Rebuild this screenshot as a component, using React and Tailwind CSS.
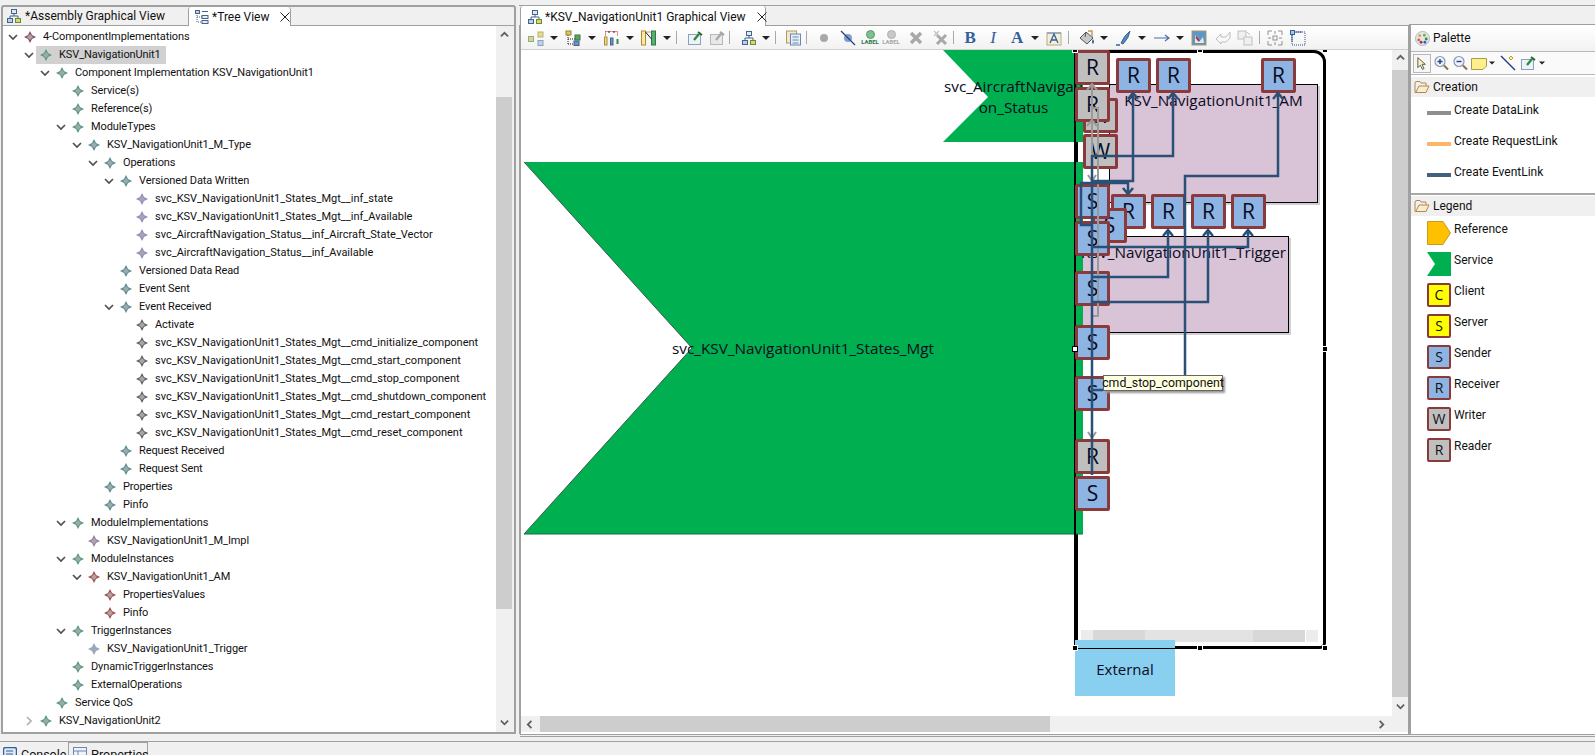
import React from "react";

// Tree rows: [level, open, diamond colour, label]
const GREEN = "#4f9a80";
const TEAL = "#4f8f96";
const LAV = "#8f8cc4";
const GRAY = "#5f5f5f";
const PLUM = "#8a4a68";
const MAUVE = "#9a7aa8";
const RED = "#a84a4a";
const SKY = "#8fa6cc";

const ROWS = [
  [0, true, PLUM, "4-ComponentImplementations"],
  [1, true, GREEN, "KSV_NavigationUnit1", true],
  [2, true, GREEN, "Component Implementation KSV_NavigationUnit1"],
  [3, null, GREEN, "Service(s)"],
  [3, null, GREEN, "Reference(s)"],
  [3, true, GREEN, "ModuleTypes"],
  [4, true, TEAL, "KSV_NavigationUnit1_M_Type"],
  [5, true, TEAL, "Operations"],
  [6, true, TEAL, "Versioned Data Written"],
  [7, null, LAV, "svc_KSV_NavigationUnit1_States_Mgt__inf_state"],
  [7, null, LAV, "svc_KSV_NavigationUnit1_States_Mgt__inf_Available"],
  [7, null, LAV, "svc_AircraftNavigation_Status__inf_Aircraft_State_Vector"],
  [7, null, LAV, "svc_AircraftNavigation_Status__inf_Available"],
  [6, null, TEAL, "Versioned Data Read"],
  [6, null, TEAL, "Event Sent"],
  [6, true, TEAL, "Event Received"],
  [7, null, GRAY, "Activate"],
  [7, null, GRAY, "svc_KSV_NavigationUnit1_States_Mgt__cmd_initialize_component"],
  [7, null, GRAY, "svc_KSV_NavigationUnit1_States_Mgt__cmd_start_component"],
  [7, null, GRAY, "svc_KSV_NavigationUnit1_States_Mgt__cmd_stop_component"],
  [7, null, GRAY, "svc_KSV_NavigationUnit1_States_Mgt__cmd_shutdown_component"],
  [7, null, GRAY, "svc_KSV_NavigationUnit1_States_Mgt__cmd_restart_component"],
  [7, null, GRAY, "svc_KSV_NavigationUnit1_States_Mgt__cmd_reset_component"],
  [6, null, TEAL, "Request Received"],
  [6, null, TEAL, "Request Sent"],
  [5, null, TEAL, "Properties"],
  [5, null, TEAL, "Pinfo"],
  [3, true, GREEN, "ModuleImplementations"],
  [4, null, MAUVE, "KSV_NavigationUnit1_M_Impl"],
  [3, true, GREEN, "ModuleInstances"],
  [4, true, RED, "KSV_NavigationUnit1_AM"],
  [5, null, RED, "PropertiesValues"],
  [5, null, RED, "Pinfo"],
  [3, true, GREEN, "TriggerInstances"],
  [4, null, SKY, "KSV_NavigationUnit1_Trigger"],
  [3, null, GREEN, "DynamicTriggerInstances"],
  [3, null, GREEN, "ExternalOperations"],
  [2, null, GREEN, "Service QoS"],
  [1, false, GREEN, "KSV_NavigationUnit2"],
];

const INDENT = ["pl-[4px]", "pl-[20px]", "pl-[36px]", "pl-[52px]", "pl-[68px]", "pl-[84px]", "pl-[100px]", "pl-[116px]"];

// Canvas nodes, in page coordinates
const PORTS = [
  ["W", 1083, 98, "g"],
  ["R", 1075, 50, "g"],
  ["R", 1075, 87, "g"],
  ["W", 1083, 134, "g"],
  ["R", 1116, 58, "b"],
  ["R", 1156, 58, "b"],
  ["R", 1261, 58, "b"],
  ["R", 1111, 194, "b"],
  ["R", 1151, 194, "b"],
  ["R", 1191, 194, "b"],
  ["R", 1231, 194, "b"],
  ["S", 1092, 208, "b"],
  ["S", 1075, 184, "b"],
  ["S", 1075, 221, "b"],
  ["S", 1075, 271, "b"],
  ["S", 1075, 325, "b"],
  ["S", 1075, 376, "b"],
  ["R", 1075, 439, "g"],
  ["S", 1075, 476, "b"],
];

const HANDLES = [
  [1075, 50], [1200, 50], [1325, 50], [1325, 349], [1075, 648], [1200, 648], [1325, 648],
];

function Diamond({ color }) {
  return (
    <svg viewBox="0 0 12 12" className="w-3 h-3 shrink-0">
      <path d="M6 0 L8 4 L12 6 L8 8 L6 12 L4 8 L0 6 L4 4 Z" fill={color} />
      <path d="M6 3 L9 6 L6 9 L3 6 Z" fill="#a6a6a6" />
    </svg>
  );
}

function Chevron({ open }) {
  return (
    <svg viewBox="0 0 12 12" className="w-3 h-3 shrink-0">
      {open ? (
        <path d="M2 4 L6 8 L10 4" fill="none" stroke="#505050" strokeWidth="1.7" />
      ) : (
        <path d="M4 2 L8 6 L4 10" fill="none" stroke="#b0b0b0" strokeWidth="1.7" />
      )}
    </svg>
  );
}

function TreeRow({ level, open, color, label, selected }) {
  return (
    <div className={`flex items-center h-[18px] whitespace-nowrap ${INDENT[level]}`}>
      {open === null ? <span className="w-3 shrink-0" /> : <Chevron open={open} />}
      <span className={`flex items-center h-[18px] ml-[1px] pl-[4px] pr-[5px] ${selected ? "bg-[#d1d1d1]" : ""}`}>
        <Diamond color={color} />
        <span className={`ml-[7px] ${label.includes("__") ? "tracking-normal" : ""}`}>{label}</span>
      </span>
    </div>
  );
}

function Arrow({ dir }) {
  const d = { up: "M1 6 L5 2 L9 6", down: "M1 3 L5 7 L9 3", left: "M6 1 L2 5 L6 9", right: "M3 1 L7 5 L3 9" }[dir];
  return (
    <svg viewBox="0 0 10 10" className="w-[9px] h-[9px]">
      <path d={d} fill="none" stroke="#606060" strokeWidth="2" />
    </svg>
  );
}

function CloseX({ className = "" }) {
  return (
    <svg viewBox="0 0 10 10" className={`w-[10px] h-[10px] shrink-0 ${className}`}>
      <path d="M0.5 0.5 L9.5 9.5 M9.5 0.5 L0.5 9.5" stroke="#222" strokeWidth="1" />
    </svg>
  );
}

function VScroll({ children }) {
  return <div className="flex flex-col w-[16px] shrink-0 bg-[#f0f0f0]">{children}</div>;
}

function Ic({ className = "", children }) {
  return (
    <svg viewBox="0 0 16 16" className={`w-4 h-4 shrink-0 ${className}`}>
      {children}
    </svg>
  );
}

function Drop({ className = "" }) {
  return (
    <span className={`flex justify-center shrink-0 ${className}`}>
      <span className="w-0 h-0 border-x-[4px] border-x-transparent border-t-[4px] border-t-[#222]" />
    </span>
  );
}

function Sep({ className = "" }) {
  return <span className={`w-[1px] h-[13px] mr-[1px] bg-[#a8a8a8] shrink-0 ${className}`} />;
}

function NetIcon({ className }) {
  return (
    <Ic className={className}>
      <path d="M8 5 V8 M4 11 V8 H12 V11" stroke="#44648c" fill="none" />
      <rect x="5.5" y="1.5" width="5" height="4" fill="#dfe9f5" stroke="#44648c" />
      <rect x="1.5" y="10.5" width="5" height="4" fill="#b8d0ea" stroke="#44648c" />
      <rect x="9.5" y="10.5" width="5" height="4" fill="#d9d86a" stroke="#6a8a3a" />
    </Ic>
  );
}

function TreeIcon({ className }) {
  return (
    <Ic className={className}>
      <path d="M3 4 V13 H8 M3 8 H8" stroke="#44648c" fill="none" strokeDasharray="1 1" />
      <rect x="1.5" y="1.5" width="4" height="3" fill="#b8d0ea" stroke="#44648c" />
      <rect x="8" y="6.5" width="6" height="3" fill="#e8eef5" stroke="#44648c" />
      <rect x="8" y="11.5" width="6" height="3" fill="#e8eef5" stroke="#44648c" />
      <path d="M8 2.5 H14" stroke="#44648c" />
    </Ic>
  );
}

function NoteIcon({ className }) {
  return (
    <Ic className={className}>
      <rect x="1.5" y="4.5" width="12" height="10" fill="#eef3fa" stroke="#8aa0bc" />
      <path d="M7 10 L12 4" stroke="#2e8b3d" strokeWidth="2.4" />
      <path d="M11 2 L15 5" stroke="#1e6b2d" strokeWidth="1.8" />
    </Ic>
  );
}

function Toolbar() {
  return (
    <div className="flex items-center h-[24px] shrink-0 pl-[7px] border-b border-[#d0d0d0] bg-gradient-to-b from-white to-[#f2f2f2]">
      <Ic>
        <rect x="0.5" y="6.5" width="5" height="5" fill="#c8d99a" stroke="#a0a878" />
        <rect x="10" y="2" width="5" height="5" fill="#e6dc90" stroke="#b8b078" />
        <rect x="10" y="10.5" width="5" height="5" fill="#bcd3ec" stroke="#8aa0bc" />
      </Ic>
      <Drop className="w-[20px]" />
      <Ic className="w-[18px]">
        <path d="M3 5 V14 M3 9 H10 M3 14 H8" stroke="#222" strokeDasharray="1 1" fill="none" />
        <rect x="1" y="1" width="5" height="4" fill="#e3c65a" stroke="#9a8430" />
        <rect x="10" y="5" width="5" height="5" fill="#5aa55a" stroke="#3a7a3a" />
        <rect x="9" y="11" width="5" height="4.5" fill="#6f8fc8" stroke="#44648c" />
      </Ic>
      <Drop className="w-[20px]" />
      <Ic className="w-[19px]">
        <path d="M2 1.5 H14 M2 1.5 V6 M14 1.5 V6" stroke="#d02020" strokeDasharray="1 1" fill="none" />
        <rect x="1" y="7" width="2.5" height="8" fill="#f0dc90" stroke="#b08a30" />
        <rect x="7" y="8" width="2.5" height="7" fill="#6f8fc8" stroke="#44648c" />
        <rect x="13" y="9" width="2" height="5" fill="#3a8a4a" />
        <path d="M5 2 H6 M10 2 H11" stroke="#222" strokeWidth="2" />
      </Ic>
      <Drop className="w-[18px]" />
      <Ic className="w-[19px]">
        <rect x="1" y="1" width="4" height="14" fill="#fbeaa0" stroke="#b08a30" />
        <rect x="11" y="1" width="4" height="14" fill="#55b070" stroke="#2e7a45" />
        <path d="M5 2 L11 9" stroke="#222" />
        <path d="M5 2 H11" stroke="#d02020" strokeDasharray="1 1" />
      </Ic>
      <Drop className="w-[18px]" />
      <Sep />
      <NoteIcon className="ml-[9px]" />
      <Ic className="ml-[6px]">
        <rect x="1.5" y="4.5" width="12" height="10" fill="#e8e8e8" stroke="#b8b8b8" />
        <path d="M7 10 L12 4 M11 2 L15 5" stroke="#a8a8a8" strokeWidth="2.2" />
      </Ic>
      <Sep className="ml-[4px]" />
      <NetIcon className="ml-[10px]" />
      <Drop className="w-[18px]" />
      <Sep />
      <Ic className="ml-[8px] w-[17px]">
        <rect x="1" y="1" width="10" height="12" fill="#f3e8c8" stroke="#b09a68" />
        <rect x="5" y="4" width="10" height="11" fill="#e6eef8" stroke="#6a88b0" />
        <path d="M7 7 H13 M7 10 H13 M7 13 H13" stroke="#6a88b0" />
      </Ic>
      <Sep className="ml-[4px]" />
      <Ic className="ml-[8px]">
        <circle cx="8" cy="8" r="4" fill="#a8a8a8" />
      </Ic>
      <Ic className="ml-[8px]">
        <circle cx="8" cy="8" r="4" fill="#7f9fc4" />
        <path d="M1 1 L15 15" stroke="#24408a" strokeWidth="1.3" />
      </Ic>
      <span className="ml-[6px] flex flex-col items-center w-4 shrink-0">
        <span className="w-[9px] h-[9px] rounded-full bg-[#7fbf8f] border border-[#5a9a6a]" />
        <span className="text-[6px] leading-[6px] font-bold text-[#2e7a45]">LABEL</span>
      </span>
      <span className="ml-[5px] flex flex-col items-center w-4 shrink-0">
        <span className="w-[9px] h-[9px] rounded-full bg-[#c8c8c8] border border-[#b0b0b0]" />
        <span className="text-[6px] leading-[6px] font-bold text-[#a8a8a8]">LABEL</span>
      </span>
      <Ic className="ml-[9px]">
        <path d="M3 3 L13 13 M13 3 L3 13" stroke="#a8a8a8" strokeWidth="3.4" />
      </Ic>
      <Ic className="ml-[9px]">
        <path d="M4 5 L13 14 M13 5 L4 14" stroke="#a8a8a8" strokeWidth="3" />
        <path d="M1 1 L6 6 M6 1 L1 6" stroke="#c0c0c0" strokeWidth="1.2" />
      </Ic>
      <Sep className="ml-[4px]" />
      <span className="ml-[7px] w-4 shrink-0 text-center font-['Liberation_Serif',serif] font-bold text-[17px] leading-none text-[#34609a]">B</span>
      <span className="ml-[7px] w-4 shrink-0 text-center font-['Liberation_Serif',serif] italic text-[17px] leading-none text-[#34609a]">I</span>
      <span className="ml-[8px] w-4 shrink-0 text-center font-['Liberation_Serif',serif] font-bold text-[17px] leading-none text-[#34609a]">A</span>
      <Drop className="w-[20px]" />
      <Ic className="ml-[1px]">
        <rect x="1" y="3" width="14" height="12" fill="#f5efd8" stroke="#b8a880" />
        <path d="M1 3 H15" stroke="#7f9fc4" strokeWidth="1.4" />
        <path d="M4 13 L8 4 L12 13 M5.5 10 H10.5" stroke="#34609a" fill="none" strokeWidth="1.3" />
      </Ic>
      <Sep className="ml-[6px]" />
      <Ic className="ml-[9px]">
        <path d="M7 2 L14 8 L8 14 L1 8 Z" fill="#c8c8c8" stroke="#555" />
        <path d="M7 2 L6 7" stroke="#555" />
        <path d="M14 9 Q16 12 14 14 Q12 12 14 9" fill="#34609a" />
        <path d="M9 1 H13 V7" stroke="#b89a50" fill="none" strokeWidth="1.4" />
      </Ic>
      <Drop className="w-[18px]" />
      <Ic className="ml-[3px]">
        <path d="M5 13 Q8 6 14 1 Q13 8 7 14 Z" fill="#5f86c0" stroke="#34609a" />
        <path d="M0 15 H4" stroke="#34609a" strokeWidth="1.5" />
      </Ic>
      <Drop className="w-[18px] ml-[1px]" />
      <Ic className="ml-[3px]">
        <path d="M0 8 H15 M11 5 L15 8 L11 11" stroke="#4a6ea8" fill="none" strokeWidth="1.2" />
      </Ic>
      <Drop className="w-[18px] ml-[1px]" />
      <Ic className="ml-[2px]">
        <rect x="1" y="1" width="14" height="14" fill="#5f96c8" stroke="#a89a60" />
        <path d="M4 5 L8 12 L12 7 L13 13 H4 Z" fill="#e8e8e8" />
        <path d="M5 7 L8 11" stroke="#c83030" strokeWidth="2" />
      </Ic>
      <Ic className="ml-[8px]">
        <path d="M1 9 L6 4 V7 H11 L15 2 V8 L11 12 H6 V14 Z" fill="#f8f8f8" stroke="#c0c0c0" />
      </Ic>
      <Ic className="ml-[6px]">
        <rect x="1" y="1" width="8" height="8" fill="#f0f0f0" stroke="#c0c0c0" />
        <rect x="7" y="7" width="8" height="8" fill="#f0f0f0" stroke="#c0c0c0" />
        <path d="M10 2 L13 5" stroke="#c0c0c0" />
      </Ic>
      <Sep className="ml-[6px]" />
      <Ic className="ml-[6px]">
        <path d="M1 5 V1 H5 M11 1 H15 V5 M15 11 V15 H11 M5 15 H1 V11" stroke="#909090" fill="none" />
        <rect x="6" y="6" width="4" height="4" fill="none" stroke="#909090" />
        <path d="M8 1 V4 M8 12 V15 M1 8 H4 M12 8 H15" stroke="#909090" />
      </Ic>
      <Ic className="ml-[7px]">
        <rect x="2" y="2" width="13" height="13" fill="none" stroke="#34507a" strokeDasharray="1 1" />
        <rect x="0.5" y="0.5" width="4" height="4" fill="#a8c8e8" stroke="#34609a" />
        <path d="M2 5 V12 M5 2 H12" stroke="#34609a" />
      </Ic>
    </div>
  );
}

function Port({ letter, x, y, kind }) {
  return (
    <div
      className={`absolute w-[35px] h-[35px] flex items-center justify-center rounded-[2px] border-[3px] border-[#8a3a3a] text-[21px] leading-none text-[#0a0a1e] ${kind === "b" ? "bg-[#8db4e2]" : "bg-[#bfbfbf]"}`}
      style={{ left: x - 521, top: y - 50 }}
    >
      {letter}
    </div>
  );
}

function Diagram() {
  return (
    <div className="relative w-[871px] h-[666px] shrink-0 overflow-hidden bg-white font-['Open_Sans',sans-serif] tracking-normal">
      {/* compartment */}
      <div className="absolute left-[554px] top-0 w-[251px] h-[599px] border-[3px] border-black rounded-tr-[12px] rounded-br-[6px]" />
      {/* service shapes */}
      <svg viewBox="521 50 871 666" className="absolute inset-0 w-[871px] h-[666px]">
        <path d="M943 50 H1083 V142 H943 L988 97 Z" fill="#00b050" />
        <path d="M524 162 H1083 V534 H524 L692 348 Z" fill="#00b050" />
        <path d="M524 162 L692 348 L524 534" fill="none" stroke="#3a5a4a" strokeWidth="1" />
        <path d="M524 534 H1083" stroke="#1e6b3c" strokeWidth="1" />
      </svg>
      <div className="absolute left-[420px] top-[26px] w-[145px] text-center text-[15.3px] leading-[21px] break-all text-[#0a0a1e]">svc_AircraftNavigation_Status</div>
      <div className="absolute left-[82px] top-[288px] w-[400px] text-center text-[15.3px] leading-[21px] text-[#0a0a1e]">svc_KSV_NavigationUnit1_States_Mgt</div>
      <div className="absolute left-[553px] top-0 w-[2px] h-[599px] bg-black" />
      {/* module and trigger boxes */}
      <div className="absolute left-[588px] top-[34px] w-[209px] h-[119px] bg-[#d9c3d6] border border-black shadow-[2px_2px_0_#cfcfd4] text-center text-[15.3px] leading-[30px] text-[#0a0a1e]">KSV_NavigationUnit1_AM</div>
      <div className="absolute left-[562px] top-[186px] w-[206px] h-[97px] bg-[#d9c3d6] border-t border-r border-b border-black shadow-[2px_2px_0_#cfcfd4] text-[15.3px] leading-[30px] text-[#0a0a1e]">
        <span className="absolute right-[2px] top-0 whitespace-nowrap">KSV_NavigationUnit1_Trigger</span>
      </div>
      {PORTS.map(([l, x, y, k], i) => (
        <Port key={i} letter={l} x={x} y={y} kind={k} />
      ))}
      {/* connectors */}
      <svg viewBox="521 50 871 666" fill="none" className="absolute inset-0 w-[871px] h-[666px]">
        <g stroke="#9a9a9a" strokeWidth="2">
          <path d="M1092 84 V330 M1092 108 H1098 V316 H1092" />
          <path d="M1087 90 L1092 84 L1097 90 M1087 126 L1092 120 L1097 126 M1088 175 L1092 181 L1096 175 M1088 432 L1092 438 L1096 432" />
        </g>
        <g stroke="#2a5078" strokeWidth="2.5">
          <path d="M1092 155 V475" />
          <path d="M1092 181 H1133 V93 M1128 99 L1133 93 L1138 99" />
          <path d="M1092 156 H1173 V93 M1168 99 L1173 93 L1178 99" />
          <path d="M1185 375 V176 H1278 V93 M1273 99 L1278 93 L1283 99" />
          <path d="M1092 390 H1103" />
          <path d="M1092 225 H1081 V183 H1128 V194 M1123 188 L1128 194 L1133 188" />
          <path d="M1092 277 H1168 V230 M1163 236 L1168 230 L1173 236" />
          <path d="M1092 302 H1208 V230 M1203 236 L1208 230 L1213 236" />
          <path d="M1092 247 H1248 V230 M1243 236 L1248 230 L1253 236" />
        </g>
      </svg>
      {/* tooltip */}
      <div className="absolute left-[582px] top-[325px] w-[120px] h-[16px] flex items-center justify-center bg-[#ffffe1] border border-[#666] shadow-[2px_2px_2px_#999] font-['Roboto',sans-serif] text-[12.3px] leading-none text-[#111] whitespace-nowrap">cmd_stop_component</div>
      {/* inner scrollbar */}
      <div className="absolute left-[560px] top-[580px] w-[237px] h-[12px] flex bg-[#e3e3e3]">
        <span className="w-[12px] bg-[#ececec]" />
        <span className="w-[52px] bg-[#d8d8d8]" />
        <span className="w-[108px]" />
        <span className="w-[52px] bg-[#d8d8d8]" />
        <span className="w-[1px] bg-white" />
        <span className="w-[12px] bg-[#ececec]" />
      </div>
      {/* external */}
      <div className="absolute left-[554px] top-[590px] w-[100px] h-[56px] flex items-center justify-center pt-[3px] bg-[#89cff0] text-[15px] text-[#0a0a1e]">External</div>
      <div className="absolute left-[554px] top-[598px] w-[100px] h-[1px] bg-black" />
      {/* selection handles */}
      {HANDLES.map(([x, y], i) => (
        <span key={i} className="absolute w-[6px] h-[6px] bg-black border border-white" style={{ left: x - 524, top: y - 53 }} />
      ))}
      <span className="absolute left-[551px] top-[296px] w-[6px] h-[6px] bg-white border border-black" />
    </div>
  );
}

function LegendBox({ letter, kind }) {
  const bg = { y: "bg-[#ffff00]", b: "bg-[#8db4e2]", g: "bg-[#bfbfbf]" }[kind];
  return (
    <span className={`w-[24px] h-[24px] shrink-0 flex items-center justify-center rounded-[2px] border-[2px] border-[#8a3a3a] font-['Open_Sans',sans-serif] text-[14px] leading-none text-[#111] ${bg}`}>
      {letter}
    </span>
  );
}

function PaletteRow({ icon, label }) {
  return (
    <div className="flex h-[31px] pl-[16px]">
      <span className="w-[24px] shrink-0">{icon}</span>
      <span className="ml-[3px] leading-[16px]">{label}</span>
    </div>
  );
}

function LinkIcon({ className }) {
  return (
    <span className="flex h-[13px] items-end">
      <span className={`w-[24px] h-[4px] ${className}`} />
    </span>
  );
}

function Folder() {
  return (
    <svg viewBox="0 0 16 14" className="w-4 h-[14px] shrink-0">
      <path d="M1 3 V12.5 H12 L15 6 H5 L2 12" fill="#fbeccb" stroke="#b08a50" />
      <path d="M1 3 Q1 1.5 3 1.5 H6 L7 3 H12 V6" fill="none" stroke="#b08a50" />
    </svg>
  );
}

function PaletteHead({ label }) {
  return (
    <div className="flex items-center h-[20px] pl-[3px] bg-[#f0f0f0] gap-[2px]">
      <Folder />
      <span className="ml-[1px]">{label}</span>
    </div>
  );
}

function Palette() {
  return (
    <div className="flex-1 flex flex-col border-l-2 border-[#a0a0a0] bg-white text-[12px] tracking-normal">
      <div className="flex items-center h-[27px] shrink-0 pl-[4px] border-b border-[#b8b8b8] bg-gradient-to-b from-white to-[#f2f2f2]">
        <svg viewBox="0 0 16 16" className="w-[15px] h-[15px] shrink-0">
          <circle cx="8" cy="8" r="7.5" fill="#dfe6ee" stroke="#b0b8c0" />
          <circle cx="5" cy="5" r="1.5" fill="#e8a020" />
          <circle cx="10" cy="4.5" r="1.5" fill="#7fb030" />
          <circle cx="12" cy="8.5" r="1.5" fill="#2e8b3d" />
          <circle cx="4" cy="9.5" r="1.5" fill="#e06020" />
          <circle cx="6.5" cy="12" r="1.5" fill="#c02040" />
          <circle cx="10.5" cy="12" r="1.5" fill="#3060c0" />
        </svg>
        <span className="ml-[3px]">Palette</span>
      </div>
      <div className="flex items-center h-[23px] shrink-0 border-b border-[#b8b8b8] bg-[#fafafa]">
        <span className="ml-[2px] w-[18px] h-[19px] flex items-center justify-center border border-[#b8b8b8] bg-[#f6f6f6]">
          <svg viewBox="0 0 12 16" className="w-[10px] h-[15px]">
            <path d="M1 1 V13 L4 10 L6.5 15 L8.5 14 L6 9 H10 Z" fill="#fbf2b8" stroke="#444" />
          </svg>
        </span>
        <Ic className="ml-[2px]">
          <circle cx="7" cy="6.5" r="5" fill="#eef3fa" stroke="#8a9ab0" strokeWidth="1.2" />
          <path d="M4.5 6.5 H9.5 M7 4 V9" stroke="#24408a" strokeWidth="1.4" />
          <path d="M11 10.5 L15 14.5" stroke="#8a7040" strokeWidth="2" />
        </Ic>
        <Ic className="ml-[3px]">
          <circle cx="7" cy="6.5" r="5" fill="#eef3fa" stroke="#8a9ab0" strokeWidth="1.2" />
          <path d="M4.5 6.5 H9.5" stroke="#24408a" strokeWidth="1.4" />
          <path d="M11 10.5 L15 14.5" stroke="#8a7040" strokeWidth="2" />
        </Ic>
        <Ic className="ml-[3px]">
          <path d="M0.5 3.5 H15.5 V11 L12 14.5 H0.5 Z" fill="#fdf08a" stroke="#a89a50" />
        </Ic>
        <Drop className="w-[10px] scale-75" />
        <Ic className="ml-[3px]">
          <path d="M1 1 L15 15" stroke="#24408a" strokeWidth="1.4" />
          <path d="M11 1 L13 3 L11 5 L9 3 Z" fill="#fdf08a" stroke="#b8a040" />
        </Ic>
        <NoteIcon className="ml-[4px]" />
        <Drop className="w-[12px] scale-75" />
      </div>
      <div className="h-[2px] shrink-0" />
      <PaletteHead label="Creation" />
      <div className="h-[5px] shrink-0" />
      <PaletteRow icon={<LinkIcon className="bg-[#8e8e8e]" />} label="Create DataLink" />
      <PaletteRow icon={<LinkIcon className="bg-[#ffb566]" />} label="Create RequestLink" />
      <PaletteRow icon={<LinkIcon className="bg-[#44607f]" />} label="Create EventLink" />
      <div className="h-[2px] -mt-[2px] shrink-0 bg-[#a8a8a8]" />
      <div className="h-[1px] shrink-0" />
      <PaletteHead label="Legend" />
      <div className="h-[5px] shrink-0" />
      <PaletteRow
        icon={
          <svg viewBox="0 0 24 24" className="w-6 h-6">
            <path d="M0.5 0.5 H16 L23.5 12 L16 23.5 H0.5 Z" fill="#ffc000" stroke="#c89a20" />
          </svg>
        }
        label="Reference"
      />
      <PaletteRow
        icon={
          <svg viewBox="0 0 24 24" className="w-6 h-6">
            <path d="M0 0 H24 V24 H0 L8 12 Z" fill="#00b050" />
          </svg>
        }
        label="Service"
      />
      <PaletteRow icon={<LegendBox letter="C" kind="y" />} label="Client" />
      <PaletteRow icon={<LegendBox letter="S" kind="y" />} label="Server" />
      <PaletteRow icon={<LegendBox letter="S" kind="b" />} label="Sender" />
      <PaletteRow icon={<LegendBox letter="R" kind="b" />} label="Receiver" />
      <PaletteRow icon={<LegendBox letter="W" kind="g" />} label="Writer" />
      <PaletteRow icon={<LegendBox letter="R" kind="g" />} label="Reader" />
    </div>
  );
}

export default function App() {
  return (
    <div className="w-[1595px] h-[755px] overflow-hidden flex flex-col bg-[#f0f0f0] font-['Roboto',sans-serif] text-[11px] tracking-[-0.1px] text-[#111]">
      <div className="h-[5px] shrink-0" />
      <div className="h-[729px] shrink-0 flex">
        {/* Tree panel */}
        <div className="ml-[1px] w-[515px] shrink-0 flex flex-col border-x-2 border-t-2 border-b-2 border-[#a0a0a0] rounded-t-[3px]">
          <div className="h-[19px] shrink-0 flex border-b border-[#a0a0a0] text-[12px] tracking-normal whitespace-nowrap">
            <div className="w-[185px] flex items-center pl-[3px] gap-[2px]">
              <NetIcon />
              <span className="ml-[1px]">*Assembly Graphical View</span>
            </div>
            <div className="w-[103px] h-[20px] flex items-center pl-[5px] bg-white border-x border-[#a0a0a0] rounded-t-[3px]">
              <TreeIcon />
              <span className="ml-[2px]">*Tree View</span>
              <CloseX className="ml-[10px]" />
            </div>
          </div>
          <div className="flex-1 flex min-h-0 bg-white">
            <div className="flex-1 pt-[2px] overflow-hidden">
              {ROWS.map(([level, open, color, label, selected], i) => (
                <TreeRow key={i} level={level} open={open} color={color} label={label} selected={selected} />
              ))}
            </div>
            <VScroll>
              <div className="h-[71px] flex justify-center pt-[5px] bg-[#f0f0f0]">
                <Arrow dir="up" />
              </div>
              <div className="h-[512px] bg-[#cdcdcd]" />
              <div className="flex-1 flex items-end justify-center pb-[5px]">
                <Arrow dir="down" />
              </div>
            </VScroll>
            <div className="w-[2px] shrink-0 bg-[#f0f0f0]" />
          </div>
        </div>
        <div className="w-[3px] shrink-0" />
        {/* Graphical view */}
        <div className="flex-1 flex min-w-0">
          <div className="w-[890px] shrink-0 flex flex-col">
            <div className="h-[21px] shrink-0 flex border-b border-[#a0a0a0] border-t border-t-[#a0a0a0] text-[12px] tracking-normal whitespace-nowrap">
              <div className="ml-[1px] w-[246px] h-[21px] flex items-center pl-[6px] bg-white border-x border-[#a0a0a0] rounded-t-[3px]">
                <NetIcon />
                <span className="ml-[2px]">*KSV_NavigationUnit1 Graphical View</span>
                <CloseX className="ml-[11px]" />
              </div>
            </div>
            <div className="flex-1 flex flex-col border-l-2 border-r border-[#a0a0a0] bg-white">
              <Toolbar />
              <div className="flex">
                <Diagram />
                <VScroll>
                  <div className="h-[20px] flex justify-center pt-[4px]">
                    <Arrow dir="up" />
                  </div>
                  <div className="h-[627px] bg-[#cdcdcd]" />
                  <div className="flex-1 flex justify-center items-center">
                    <Arrow dir="down" />
                  </div>
                </VScroll>
              </div>
              <div className="h-[16px] shrink-0 flex items-center bg-[#f0f0f0]">
                <span className="w-[19px] flex justify-center">
                  <Arrow dir="left" />
                </span>
                <span className="w-[510px] h-[16px] bg-[#cdcdcd]" />
                <span className="flex-1 flex justify-end pr-[22px]">
                  <Arrow dir="right" />
                </span>
              </div>
            </div>
          </div>
          <div className="flex-1 flex flex-col">
            <div className="h-[20px] shrink-0 border-b border-[#a0a0a0] border-t border-t-[#a0a0a0]" />
            <Palette />
          </div>
        </div>
      </div>
      {/* Bottom tabs, cut off by the window */}
      <div className="h-[3px] shrink-0 ml-[520px] border-y border-[#a0a0a0]" />
      <div className="h-[5px] shrink-0 border-b border-[#a0a0a0]" />
      <div className="flex-1 flex text-[12.5px] leading-[18px] tracking-normal pl-[3px]">
        <div className="w-[65px] flex items-start">
          <svg viewBox="0 0 14 14" className="w-[14px] h-[14px] mt-[5px] shrink-0">
            <rect x="0.5" y="0.5" width="13" height="13" rx="2" fill="#dbe8f6" stroke="#34609a" strokeWidth="1.4" />
            <path d="M3 4 H10 M3 7 H10" stroke="#34609a" />
          </svg>
          <span className="ml-[4px] mt-[4px]">Console</span>
        </div>
        <div className="w-[80px] flex items-start border-x border-t border-[#a0a0a0] pl-[4px]">
          <svg viewBox="0 0 14 14" className="w-[14px] h-[14px] mt-[4px] shrink-0">
            <rect x="0.5" y="0.5" width="13" height="13" fill="#eef3fa" stroke="#6a88b0" />
            <path d="M0.5 4 H13.5 M5 4 V14" stroke="#6a88b0" />
          </svg>
          <span className="ml-[4px] mt-[3px]">Properties</span>
        </div>
      </div>
    </div>
  );
}
